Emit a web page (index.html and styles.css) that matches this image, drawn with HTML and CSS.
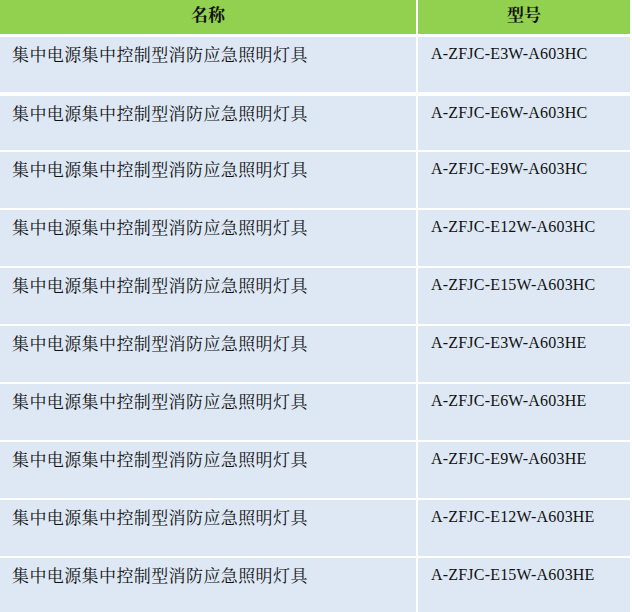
FILE: index.html
```html
<!DOCTYPE html>
<html lang="zh-CN">
<head>
<meta charset="utf-8">
<title>产品型号</title>
<link rel="stylesheet" href="styles.css">
</head>
<body>
<div class="table">
  <div class="row head">
    <div class="cell">名称</div>
    <div class="cell">型号</div>
  </div>
  <div class="row r1">
    <div class="cell name">集中电源集中控制型消防应急照明灯具</div>
    <div class="cell model">A-ZFJC-E3W-A603HC</div>
  </div>
  <div class="row r2">
    <div class="cell name">集中电源集中控制型消防应急照明灯具</div>
    <div class="cell model">A-ZFJC-E6W-A603HC</div>
  </div>
  <div class="row">
    <div class="cell name">集中电源集中控制型消防应急照明灯具</div>
    <div class="cell model">A-ZFJC-E9W-A603HC</div>
  </div>
  <div class="row">
    <div class="cell name">集中电源集中控制型消防应急照明灯具</div>
    <div class="cell model">A-ZFJC-E12W-A603HC</div>
  </div>
  <div class="row">
    <div class="cell name">集中电源集中控制型消防应急照明灯具</div>
    <div class="cell model">A-ZFJC-E15W-A603HC</div>
  </div>
  <div class="row">
    <div class="cell name">集中电源集中控制型消防应急照明灯具</div>
    <div class="cell model">A-ZFJC-E3W-A603HE</div>
  </div>
  <div class="row">
    <div class="cell name">集中电源集中控制型消防应急照明灯具</div>
    <div class="cell model">A-ZFJC-E6W-A603HE</div>
  </div>
  <div class="row">
    <div class="cell name">集中电源集中控制型消防应急照明灯具</div>
    <div class="cell model">A-ZFJC-E9W-A603HE</div>
  </div>
  <div class="row">
    <div class="cell name">集中电源集中控制型消防应急照明灯具</div>
    <div class="cell model">A-ZFJC-E12W-A603HE</div>
  </div>
  <div class="row">
    <div class="cell name">集中电源集中控制型消防应急照明灯具</div>
    <div class="cell model">A-ZFJC-E15W-A603HE</div>
  </div>
</div>
</body>
</html>
```
FILE: styles.css
```css
html, body {
  margin: 0;
  padding: 0;
  background: #ffffff;
}
body {
  font-family: "Noto Serif CJK SC", "Noto Sans CJK SC", serif;
  color: #111111;
  overflow: hidden;
}
.table {
  width: 630px;
  display: flex;
  flex-direction: column;
  gap: 2px;
}
.row {
  display: grid;
  grid-template-columns: 416px 212px;
  column-gap: 2px;
  height: 56px;
  flex: none;
}
.row .cell {
  background: #dde8f4;
  padding: 5px 0 0 12px;
  font-size: 17px;
  line-height: 23px;
}
.row.head {
  height: 34px;
  margin-bottom: 1px;
}
.row.head .cell {
  background: #92d050;
  padding: 2px 0 0 0;
  text-align: center;
  font-weight: bold;
}
.row.r1 {
  height: 55px;
  margin-bottom: 2px;
}
.row.r2 {
  height: 54px;
}
.name {
  letter-spacing: 0.4px;
  white-space: nowrap;
}
.row .model {
  font-family: "Liberation Serif", "Noto Sans CJK SC", serif;
  font-size: 16px;
  letter-spacing: 0.2px;
  padding-left: 13px;
  white-space: nowrap;
}
```
